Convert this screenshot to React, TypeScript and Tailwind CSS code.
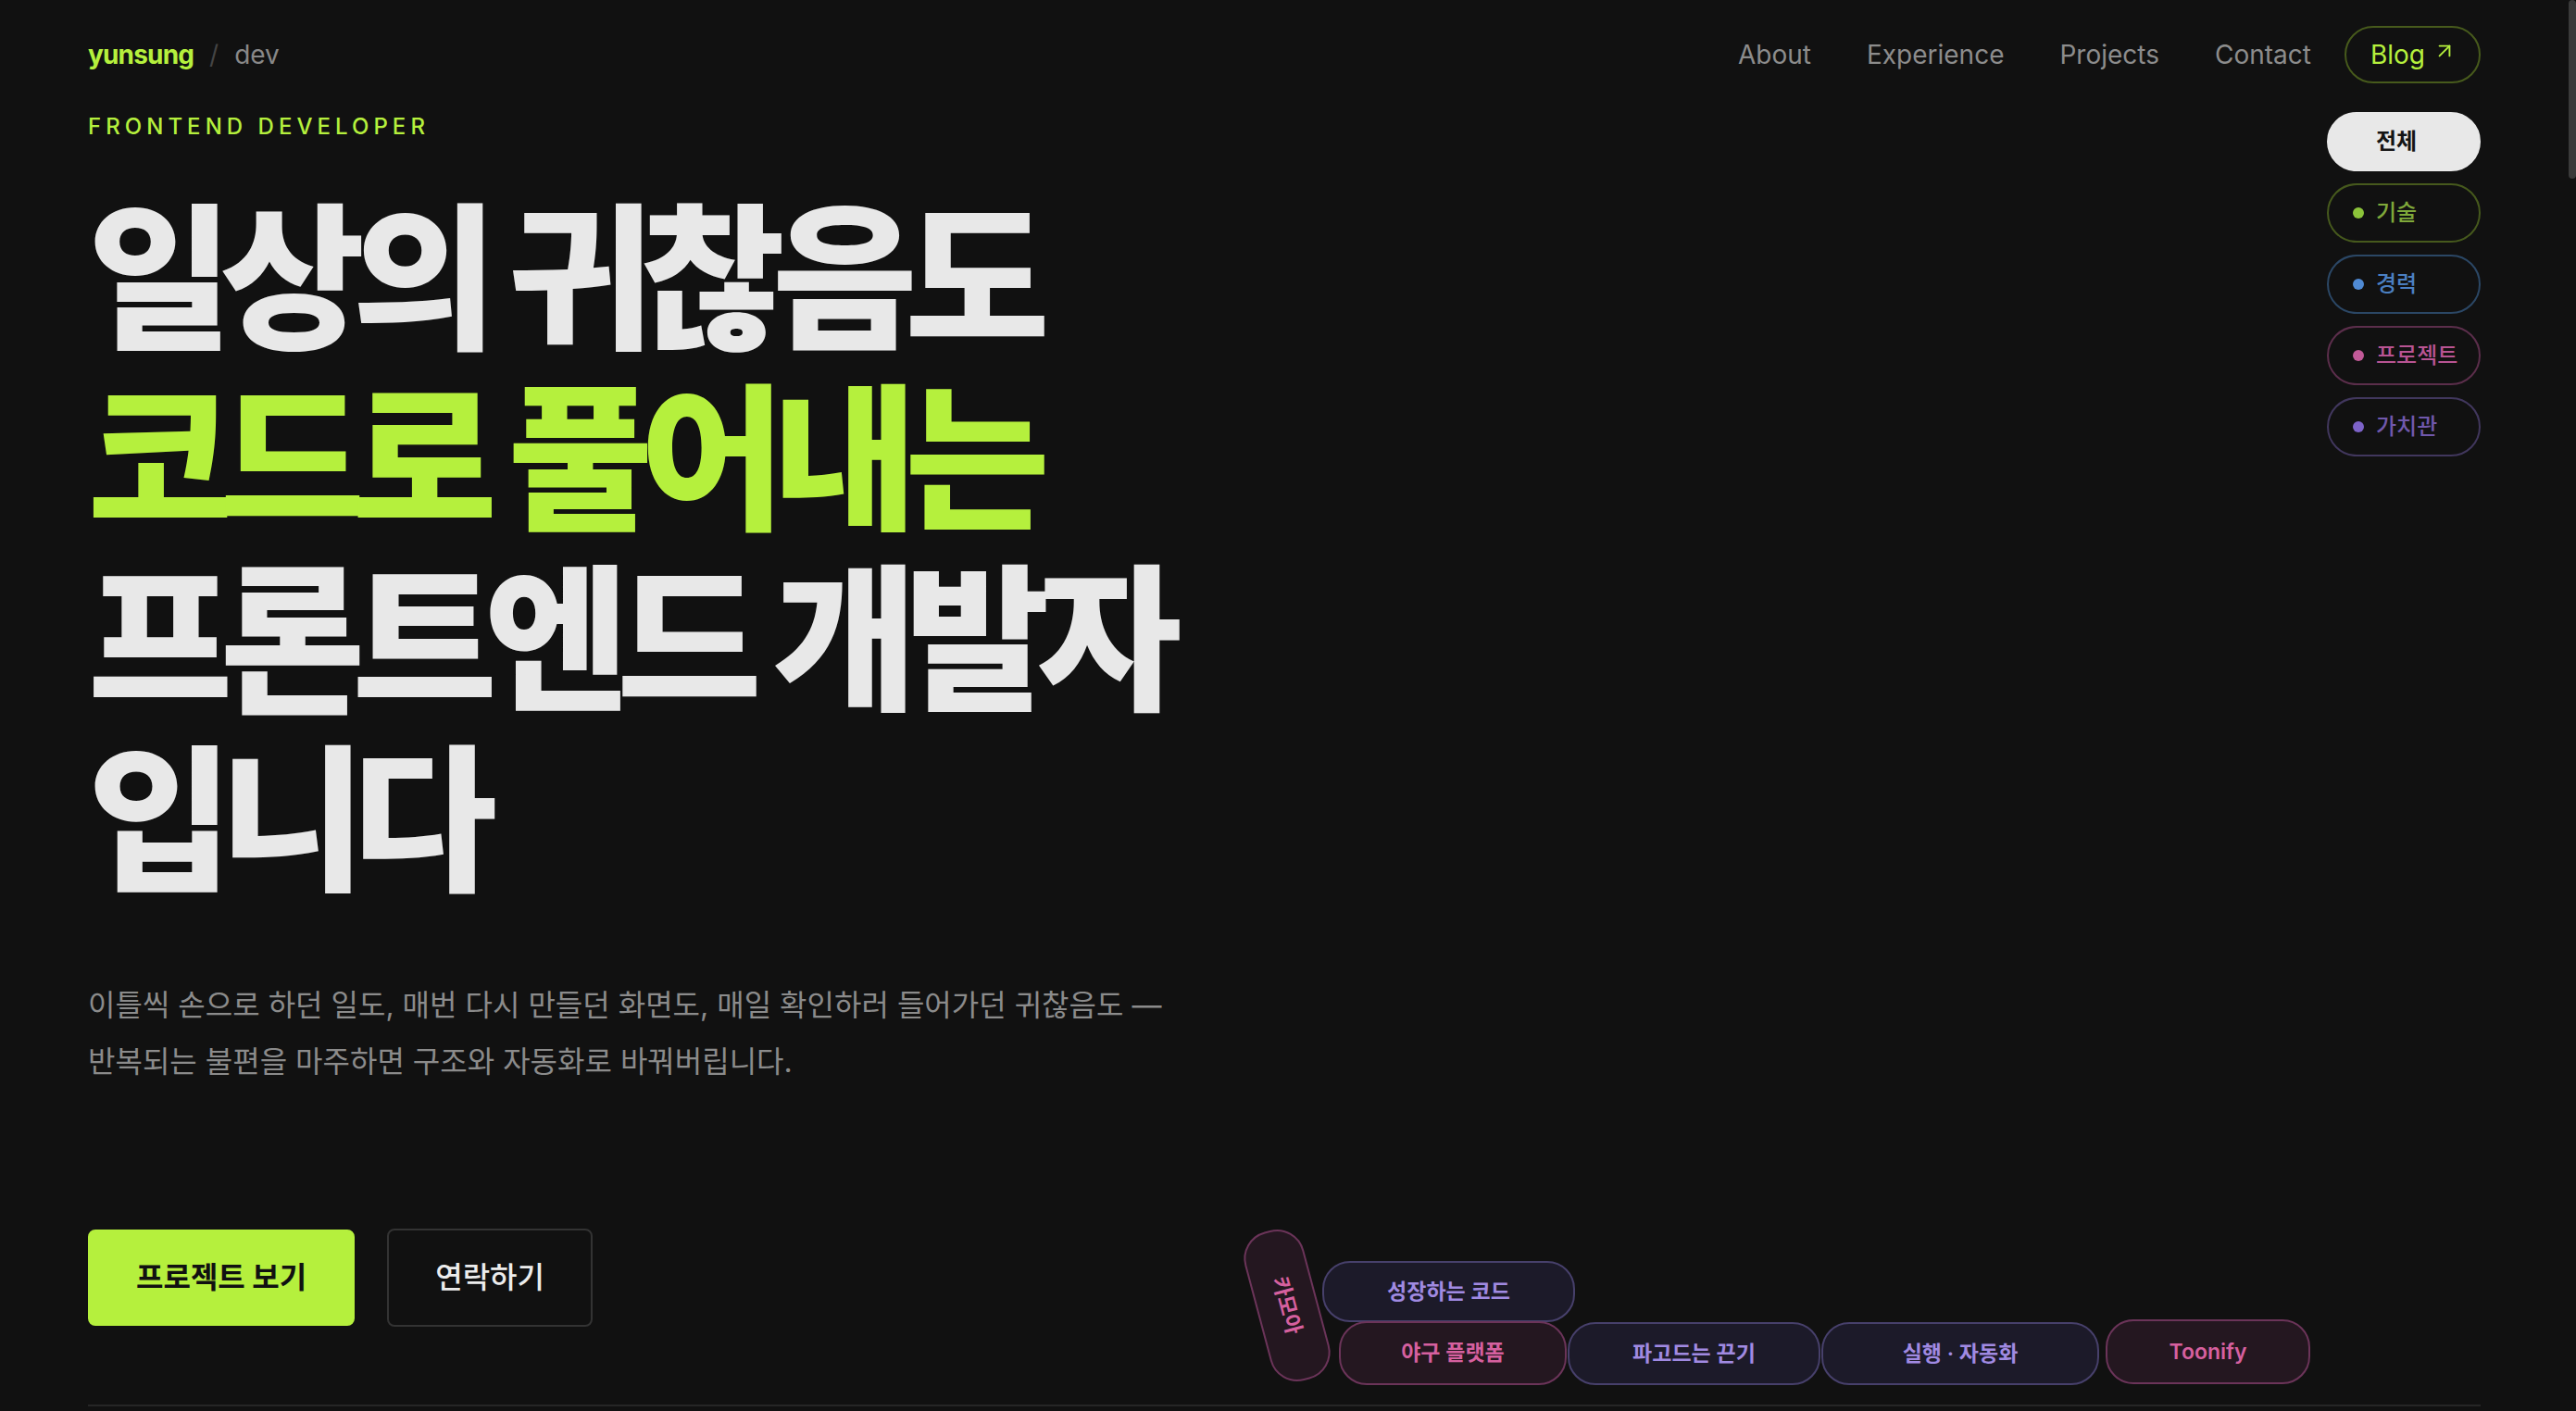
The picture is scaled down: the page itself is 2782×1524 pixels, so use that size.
import { ArrowUpRight } from 'lucide-react'

const NAV_LINKS = ['About', 'Experience', 'Projects', 'Contact']

const FILTERS = [
  { label: '전체', chip: 'bg-[#e8e8e8] border-[#e8e8e8] text-[#151515] font-semibold', dot: 'bg-transparent' },
  { label: '기술', chip: 'border-[#46591d] text-[#7fa93a] font-medium', dot: 'bg-[#8cc43a]' },
  { label: '경력', chip: 'border-[#2b4765] text-[#4b80c2] font-medium', dot: 'bg-[#4f8ad4]' },
  { label: '프로젝트', chip: 'border-[#5b2e4b] text-[#b95493] font-medium', dot: 'bg-[#c25a98]' },
  { label: '가치관', chip: 'border-[#41375d] text-[#7058ac] font-medium', dot: 'bg-[#7d63c8]' },
]

const PINK = 'bg-[#241720] border-[#6b3459] text-[#d6609f]'
const PURPLE = 'bg-[#1c1a29] border-[#47406b] text-[#a08ae2]'

// 떨어진 키워드 칩 (물리 캔버스 위 위치 그대로)
const DROPPED = [
  { label: '카모아', tone: PINK, pos: 'left-[1307px] top-[1377px] w-[166px] h-[66px] rotate-[75deg]' },
  { label: '성장하는 코드', tone: PURPLE, pos: 'left-[1428px] top-[1362px] w-[273px] h-[66px]' },
  { label: '야구 플랫폼', tone: PINK, pos: 'left-[1446px] top-[1427px] w-[246px] h-[69px]' },
  { label: '파고드는 끈기', tone: PURPLE, pos: 'left-[1693px] top-[1428px] w-[273px] h-[68px]' },
  { label: '실행 · 자동화', tone: PURPLE, pos: 'left-[1967px] top-[1428px] w-[300px] h-[68px]' },
  { label: 'Toonify', tone: PINK, pos: 'left-[2274px] top-[1425px] w-[221px] h-[70px]' },
]

export default function App() {
  return (
    <div className="relative min-h-screen overflow-hidden bg-[#111111] font-['Inter','Noto_Sans_CJK_KR',sans-serif] text-[#e8e8e8]">
      {/* 헤더 */}
      <header className="flex h-[62px] items-center justify-between pl-[95px] pr-[103px] mt-[28px]">
        <div className="flex items-center gap-[17px] text-[28px]">
          <span className="font-bold tracking-[-0.03em] text-[#b5f03d]">yunsung</span>
          <span className="text-[#444444]">/</span>
          <span className="text-[#888888]">dev</span>
        </div>
        <nav className="flex items-center">
          <ul className="flex items-center gap-[60px] text-[28px] text-[#8c8c8c]">
            {NAV_LINKS.map((link) => (
              <li key={link}>{link}</li>
            ))}
          </ul>
          <a className="ml-[36px] flex h-[62px] items-center gap-[8px] rounded-full border-2 border-[#475a1c] pl-[26px] pr-[24px] text-[28px] text-[#b5f03d]">
            Blog
            <ArrowUpRight size={26} strokeWidth={1.75} className="-translate-y-[4px]" />
          </a>
        </nav>
      </header>

      <main className="pl-[95px] pr-[103px]">
        <section className="flex items-start justify-between">
          <div>
            <p className="mt-[29px] text-[24px] leading-[36px] font-medium tracking-[0.21em] text-[#b5f03d]">
              FRONTEND DEVELOPER
            </p>

            <h1 className="mt-[38px] font-['Noto_Sans_CJK_KR',sans-serif] text-[170px] leading-[195px] font-black tracking-[-0.08em] whitespace-nowrap">
              <span className="block">일상의 귀찮음도</span>
              <span className="block text-[#b5f03d]">코드로 풀어내는</span>
              <span className="block">프론트엔드 개발자</span>
              <span className="block">입니다</span>
            </h1>

            <p className="mt-[82px] text-[32px] leading-[61px] text-[#8b8b8b]">
              이틀씩 손으로 하던 일도, 매번 다시 만들던 화면도, 매일 확인하러 들어가던 귀찮음도 —
              <br />
              반복되는 불편을 마주하면 구조와 자동화로 바꿔버립니다.
            </p>

            <div className="mt-[150px] flex items-center gap-[35px]">
              <button className="flex h-[104px] items-center rounded-[8px] border-2 border-[#b5f03d] bg-[#b5f03d] px-[50px] text-[32px] font-bold text-[#111111]">
                프로젝트 보기
              </button>
              <button className="flex h-[106px] items-center rounded-[8px] border-2 border-[#333333] px-[50px] text-[32px] font-medium text-[#ececec]">
                연락하기
              </button>
            </div>
          </div>

          {/* 카테고리 필터 */}
          <div className="mt-[31px] flex flex-col gap-[13px]">
            {FILTERS.map((f) => (
              <button
                key={f.label}
                className={`flex h-[64px] w-[166px] items-center gap-[13px] rounded-full border-2 pl-[26px] text-[24px] ${f.chip}`}
              >
                <span className={`h-[12px] w-[12px] rounded-full ${f.dot}`} />
                {f.label}
              </button>
            ))}
          </div>
        </section>

        <div className="mt-[84px] border-t-2 border-[#262626] h-[20px]" />
      </main>

      {/* 키워드 칩 */}
      <div className="pointer-events-none absolute inset-0">
        {DROPPED.map((c) => (
          <span
            key={c.label}
            className={`absolute flex items-center justify-center rounded-[30px] border-2 text-[23px] font-semibold whitespace-nowrap ${c.tone} ${c.pos}`}
          >
            {c.label}
          </span>
        ))}
      </div>

      {/* 스크롤바 */}
      <div className="fixed right-0 top-0 h-[193px] w-[8px] rounded-full bg-[#3a3a3a]" />
    </div>
  )
}
